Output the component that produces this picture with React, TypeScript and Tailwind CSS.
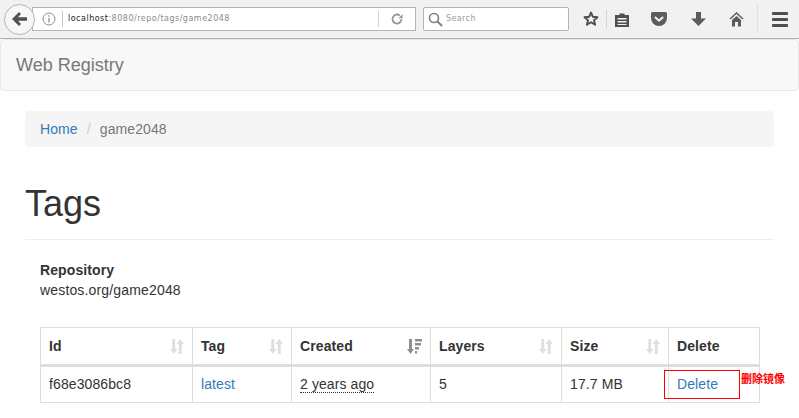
const font = "font-['Liberation_Sans',sans-serif]"

function SortIcon({ active }: { active?: boolean }) {
  if (active) {
    return (
      <svg width="15" height="15" viewBox="0 0 15 15" className="text-[#8f8f8f]" fill="currentColor">
        <path d="M2 0h3v10h2l-3.500 5L0 10h2z" />
        <path d="M8 0h7v2.500H8zM8 4h6v2.500H8zM8 8h4v2.500H8zM8 12h2v2.500H8z" />
      </svg>
    )
  }
  return (
    <svg width="14" height="15" viewBox="0 0 14 15" className="text-[#dfdfdf]" fill="currentColor">
      <path d="M2.300 0h2.900v10H7.500l-3.750 5L0 10h2.300z" />
      <path d="M8.800 15h2.900V5H14L10.250 0 6.500 5h2.300z" />
    </svg>
  )
}

const columns = [
  { label: "Id", width: "w-[152px]" },
  { label: "Tag", width: "w-[99px]" },
  { label: "Created", width: "w-[139px]", active: true },
  { label: "Layers", width: "w-[131px]" },
  { label: "Size", width: "w-[107px]" },
  { label: "Delete", width: "w-[91px]", plain: true },
]

function Toolbar() {
  return (
    <div className="flex h-[39px] items-center bg-[#f1f1f1] border-b border-[#b0b0b0]">
      <div className="ml-[4px] w-[31px] h-[31px] rounded-full border border-[#b4b4b4] bg-[#f7f7f7] flex items-center justify-center z-10 shrink-0">
        <svg width="15" height="14" viewBox="0 0 15 14" fill="#525252">
          <path d="M7 0l2 2-3 3.300h9v3.400H6l3 3.300-2 2L0 7z" />
        </svg>
      </div>
      <div className="ml-[-3px] flex items-center w-[384px] h-[24px] bg-white border border-[#b4b4b4]">
        <svg className="ml-[9px] shrink-0" width="14" height="14" viewBox="0 0 14 14" fill="none" stroke="#8f8f8f">
          <circle cx="7" cy="7" r="6" />
          <path d="M7 6v4.500M7 3.200v1.600" strokeWidth="1.300" />
        </svg>
        <div className="ml-[6px] w-px h-[16px] bg-[#c8c8c8]" />
        <span className="ml-[5px] text-[8px] tracking-[0.5px] text-[#8a8a8a] font-['DejaVu_Sans',sans-serif] whitespace-nowrap">
          <span className="text-[#222]">localhost</span>:8080/repo/tags/game2048
        </span>
        <div className="ml-auto w-px h-[16px] bg-[#d0d0d0]" />
        <svg className="mx-[12px] shrink-0" width="12" height="12" viewBox="0 0 12 12" fill="none" stroke="#8d9aa5" strokeWidth="1.800">
          <path d="M10.500 6A4.500 4.500 0 1 1 8.800 2.500" />
          <path d="M7.500 5.200L11.500 5.200 11.500 1z" fill="#8d9aa5" stroke="none" />
        </svg>
      </div>
      <div className="ml-[7px] flex items-center w-[146px] h-[24px] bg-white border border-[#b4b4b4] rounded-[2px]">
        <svg className="ml-[4px] shrink-0" width="15" height="15" viewBox="0 0 15 15" fill="none" stroke="#7f7f7f" strokeWidth="1.600">
          <circle cx="6" cy="6" r="4.500" />
          <path d="M9.500 9.500L14 14" strokeWidth="2" />
        </svg>
        <span className="ml-[3px] text-[8px] tracking-[0.4px] text-[#9a9a9a] font-['DejaVu_Sans',sans-serif]">Search</span>
      </div>
      <div className="ml-[14px] flex items-center">
        <svg width="16" height="16" viewBox="0 0 16 16" fill="none" stroke="#4f4f4f" strokeWidth="1.900">
          <path d="M8 1.500l1.900 4.300 4.600.4-3.500 3 1.100 4.600L8 11.300l-4.100 2.500L5 9.200l-3.500-3 4.600-.4z" strokeLinejoin="round" />
        </svg>
        <div className="ml-[7px] w-px h-[18px] bg-[#d4d4d4]" />
        <svg className="ml-[8px]" width="14" height="15" viewBox="0 0 14 15" fill="#4f4f4f">
          <path d="M0 3h4.500V1.500h5V3H14v12H0zM2.500 6v1.500h9V6zM2.500 9v1.500h9V9zM2.500 12v1h9v-1z" fillRule="evenodd" />
        </svg>
        <svg className="ml-[22px]" width="16" height="14" viewBox="0 0 16 14" fill="#5c5c5c">
          <path d="M1.500 0h13A1.500 1.500 0 0 1 16 1.500V6a8 8 0 0 1-16 0V1.500A1.500 1.500 0 0 1 1.500 0zM4.500 4.300L3.200 5.700 8 10l4.800-4.300-1.300-1.400L8 7.300z" fillRule="evenodd" />
        </svg>
        <svg className="ml-[24px]" width="15" height="14" viewBox="0 0 15 14" fill="#5c5c5c">
          <path d="M5 0h5v6.500h5L7.500 14 0 6.500h5z" />
        </svg>
        <svg className="ml-[23px]" width="15" height="15" viewBox="0 0 15 15" fill="#5c5c5c">
          <path d="M7.500 0L15 7h-2L7.500 2 2 7H0zM3 8l4.500-4L12 8v6.500H9V10H6v4.500H3z" />
        </svg>
        <div className="ml-[13px] w-px h-[30px] bg-[#e0e0e0]" />
        <div className="ml-[14px] w-[16px] flex flex-col gap-[3px]">
          <div className="h-[3px] bg-[#4f4f4f] rounded-[1px]" />
          <div className="h-[3px] bg-[#4f4f4f] rounded-[1px]" />
          <div className="h-[3px] bg-[#4f4f4f] rounded-[1px]" />
        </div>
      </div>
    </div>
  )
}

export default function App() {
  return (
    <div className={`w-[799px] h-[418px] overflow-hidden bg-white ${font}`}>
      <Toolbar />
      <div className="h-[52px] bg-[#f8f8f8] border border-[#e7e7e7] rounded-[4px] flex items-center px-[15px]">
        <span className="text-[18px] text-[#777]">Web Registry</span>
      </div>
      <div className="px-[25px]">
        <div className="mt-[20px] h-[36px] bg-[#f5f5f5] rounded-[4px] flex items-center px-[15px] text-[14px] tracking-[0.1px]">
          <span className="text-[#337ab7]">Home</span>
          <span className="mx-[9px] text-[#ccc]">/</span>
          <span className="text-[#777]">game2048</span>
        </div>
        <h1 className="mt-[37px] text-[36px] text-[#333] leading-[40px]">Tags</h1>
        <div className="mt-[15px] border-t border-[#eee]" />
        <div className="px-[15px]">
          <div className="mt-[20px] leading-[20px] text-[14px] font-bold text-[#333] tracking-[0.1px]">Repository</div>
          <div className="leading-[20px] text-[14px] text-[#333] tracking-[0.16px]">westos.org/game2048</div>
          <table className="mt-[27px] w-[720px] table-fixed border-collapse text-[14px] text-[#333] tracking-[0.1px]">
            <thead>
              <tr>
                {columns.map((c) => (
                  <th key={c.label} className={`${c.width} h-[38px] px-[8px] border border-[#ddd] border-b-[3px] text-left font-bold`}>
                    <div className="flex items-center justify-between">
                      {c.label}
                      {!c.plain && <SortIcon active={c.active} />}
                    </div>
                  </th>
                ))}
              </tr>
            </thead>
            <tbody>
              <tr className="h-[37px]">
                <td className="px-[8px] border border-[#ddd]">f68e3086bc8</td>
                <td className="px-[8px] border border-[#ddd] text-[#337ab7]">latest</td>
                <td className="px-[8px] border border-[#ddd]">
                  <span className="border-b border-dotted border-[#333]">2 years ago</span>
                </td>
                <td className="px-[8px] border border-[#ddd]">5</td>
                <td className="px-[8px] border border-[#ddd]">17.7 MB</td>
                <td className="relative px-[8px] border border-[#ddd] text-[#337ab7]">
                  Delete
                  <div className="absolute left-[-5px] top-[3px] w-[76px] h-[29px] border border-[#f00]" />
                  <span className="absolute left-[72px] top-[3px] whitespace-nowrap text-[11px] font-bold tracking-normal text-[#f00] font-['Noto_Sans_CJK_SC',sans-serif]">删除镜像</span>
                </td>
              </tr>
            </tbody>
          </table>
        </div>
      </div>
    </div>
  )
}
